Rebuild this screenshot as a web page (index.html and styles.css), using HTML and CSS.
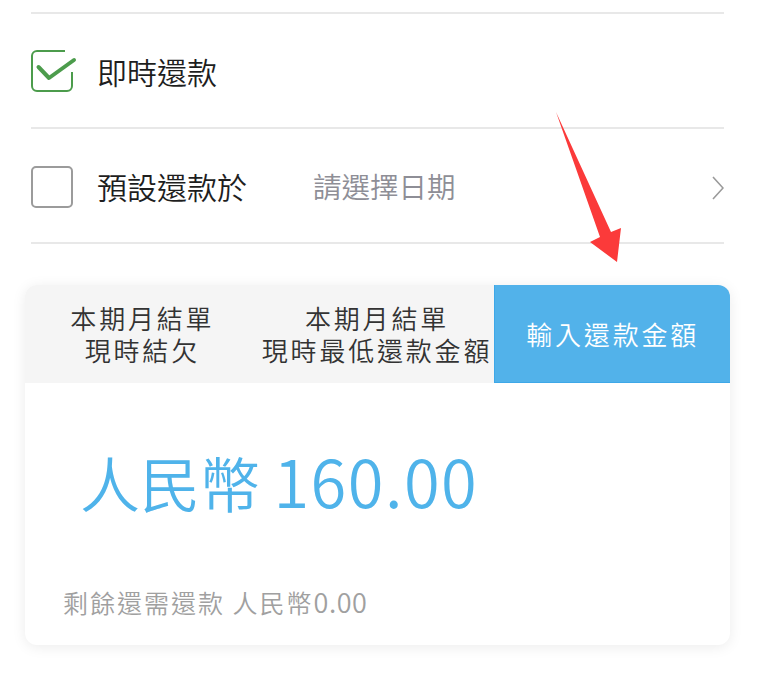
FILE: index.html
```html
<!DOCTYPE html>
<html lang="zh-Hant">
<head>
<meta charset="utf-8">
<title>還款</title>
<link rel="stylesheet" href="styles.css">
</head>
<body>
<div class="page">
  <div class="list">
    <div class="row">
      <svg class="check-svg" viewBox="0 0 46 42" width="46" height="42">
        <path d="M34 1 H6 A5 5 0 0 0 1 6 V36 A5 5 0 0 0 6 41 H36 A5 5 0 0 0 41 36 V22" fill="none" stroke="#4c9c4c" stroke-width="2"/>
        <path d="M7.5 17 L18 28 L43 10" fill="none" stroke="#4c9c4c" stroke-width="4" stroke-linecap="round" stroke-linejoin="round"/>
      </svg>
      <span class="label">即時還款</span>
    </div>
    <div class="row">
      <span class="check"></span>
      <span class="label">預設還款於</span>
      <span class="placeholder">請選擇日期</span>
      <svg class="chev" viewBox="0 0 12 24" width="12" height="24"><path d="M1 1 L11 12 L1 23" fill="none" stroke="#9a9a9a" stroke-width="1.6"/></svg>
    </div>
  </div>

  <div class="card">
    <div class="tabs">
      <div class="tab">本期月結單<br>現時結欠</div>
      <div class="tab">本期月結單<br>現時最低還款金額</div>
      <div class="tab active">輸入還款金額</div>
    </div>
    <div class="body">
      <div class="amount">人民幣 <span class="num">160.00</span></div>
      <div class="remain">剩餘還需還款 人民幣<span class="num">0.00</span></div>
    </div>
  </div>

  <svg class="arrow" viewBox="0 0 770 682" width="770" height="682">
    <polygon points="556,112 611,232 621,228 617,262 590,242 600,237" fill="#fb3a3a"/>
  </svg>
</div>
</body>
</html>
```

FILE: styles.css
```css
html, body {
  margin: 0;
  padding: 0;
  background: #ffffff;
}
body {
  font-family: "Noto Sans CJK TC", "Noto Sans", sans-serif;
  font-weight: 350;
  color: #222222;
}
.page {
  position: relative;
  width: 770px;
  height: 682px;
  overflow: hidden;
}
.list {
  margin: 0 46px 0 31px;
  padding-top: 12px;
  border-bottom: 2px solid #e8e8e8;
}
.row {
  display: flex;
  align-items: center;
  height: 113px;
  border-top: 2px solid #e8e8e8;
}
.check-svg {
  flex: none;
  overflow: visible;
  margin-top: 1px;
  margin-right: -4px;
}
.check {
  box-sizing: border-box;
  width: 42px;
  height: 42px;
  margin-top: 3px;
  border: 2px solid #9b9b9b;
  border-radius: 5px;
  flex: none;
}
.label {
  margin-left: 24px;
  font-size: 30px;
  line-height: 40px;
  color: #1e1e1e;
}
.placeholder {
  margin-left: 66px;
  font-size: 28.5px;
  line-height: 40px;
  color: #8e8e96;
}
.chev {
  margin-left: auto;
  margin-top: 4px;
}
.card {
  margin: 41px 40px 0 25px;
  background: #ffffff;
  border-radius: 12px;
  box-shadow: 0 2px 14px rgba(0, 0, 0, 0.08);
  overflow: hidden;
}
.tabs {
  display: flex;
  height: 98px;
  background: #f5f5f5;
}
.tab {
  flex: 1;
  display: flex;
  align-items: center;
  justify-content: center;
  text-align: center;
  font-size: 26px;
  line-height: 32px;
  letter-spacing: 2.8px;
  color: #333333;
  white-space: nowrap;
}
.tab.active {
  background: #52b2ea;
  color: #ffffff;
  border-left: 1px solid #3ea8e8;
  border-bottom: 1px solid #3ea8e8;
}
.body {
  padding: 57px 0 28px 38px;
}
.amount {
  margin-left: 17px;
  font-size: 60px;
  line-height: 80px;
  color: #4fb3ea;
}
.amount .num {
  font-size: 65px;
  letter-spacing: 1.5px;
}
.remain {
  margin-top: 65px;
  font-size: 25px;
  line-height: 30px;
  letter-spacing: 2px;
  color: #a0a0a0;
}
.remain .num {
  letter-spacing: 0.5px;
  font-size: 27px;
}
.arrow {
  position: absolute;
  left: 0;
  top: 0;
  pointer-events: none;
}
```
